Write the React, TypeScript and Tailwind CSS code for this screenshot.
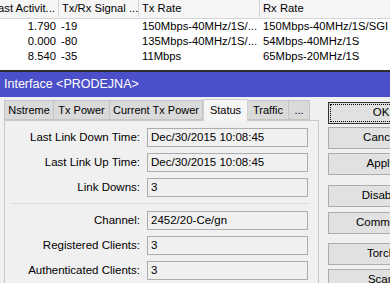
import React from "react";

type Row = {
  last: string;
  signal: string;
  tx: string;
  rx: string;
};

const rows: Row[] = [
  { last: "1.790", signal: "-19", tx: "150Mbps-40MHz/1S/...", rx: "150Mbps-40MHz/1S/SGI" },
  { last: "0.000", signal: "-80", tx: "135Mbps-40MHz/1S/...", rx: "54Mbps-40MHz/1S" },
  { last: "8.540", signal: "-35", tx: "11Mbps", rx: "65Mbps-20MHz/1S" },
];

const tabs = [
  { name: "Nstreme", w: "w-[50px]" },
  { name: "Tx Power", w: "w-[56px]" },
  { name: "Current Tx Power", w: "w-[93px]" },
  { name: "Status", w: "w-[45px]", active: true },
  { name: "Traffic", w: "w-[41px]" },
  { name: "...", w: "w-[21px]" },
];

const Field = ({ label, value }: { label: string; value: string }) => (
  <div className="flex items-center h-[19px] mb-[6px]">
    <div className="w-[142px] shrink-0 text-right pr-[7px] whitespace-nowrap">{label}</div>
    <div className="w-[161px] shrink-0 h-[19px] border border-[#acacac] bg-[#f0f0f0] px-[3px] leading-[17px] whitespace-nowrap overflow-hidden">
      {value}
    </div>
  </div>
);

const Btn = ({ label, className }: { label: string; className?: string }) => (
  <div
    className={
      "w-[106px] h-[22px] border border-[#adadad] bg-[#e1e1e1] flex items-center justify-center " +
      (className ?? "")
    }
  >
    {label}
  </div>
);

export default function App() {
  return (
    <div
      className="w-[390px] h-[283px] overflow-hidden bg-[#f0f0f0] text-[11.5px] text-black"
      style={{ fontFamily: '"Liberation Sans", Arial, sans-serif' }}
    >
      {/* registration table */}
      <div className="h-[70px] bg-white text-[11.25px]">
        <div className="flex h-[19px] bg-[#f5f5f5] border-b border-[#d5d5d5] items-end pb-[1px]">
          <div className="w-[59px] shrink-0 border-r border-[#d5d5d5] h-full flex items-end justify-end pr-[3px] whitespace-nowrap overflow-hidden">
            Last Activit...
          </div>
          <div className="w-[80px] shrink-0 border-r border-[#d5d5d5] h-full flex items-end pl-[3px] whitespace-nowrap">
            Tx/Rx Signal ...
          </div>
          <div className="w-[121px] shrink-0 border-r border-[#d5d5d5] h-full flex items-end pl-[3px]">Tx Rate</div>
          <div className="flex-1 h-full flex items-end pl-[3px]">Rx Rate</div>
        </div>
        {rows.map((r) => (
          <div key={r.last} className="flex h-[15px] items-center">
            <div className="w-[59px] shrink-0 text-right pr-[3px]">{r.last}</div>
            <div className="w-[80px] shrink-0 pl-[2px]">{r.signal}</div>
            <div className="w-[121px] shrink-0 pl-[3px] whitespace-nowrap overflow-hidden">{r.tx}</div>
            <div className="flex-1 pl-[3px] whitespace-nowrap">{r.rx}</div>
          </div>
        ))}
      </div>

      {/* window */}
      <div className="border-t-2 border-[#2e2e2e]">
        <div className="h-[25px] bg-[#4b4fc9] text-white text-[12.5px] flex items-center pl-[4px]">
          Interface &lt;PRODEJNA&gt;
        </div>
        <div className="flex">
          <div className="w-[319px] shrink-0 pl-[4px] pt-[1px]">
            <div className="flex items-end h-[22px] text-[11px]">
              {tabs.map((t) =>
                t.active ? (
                  <div
                    key={t.name}
                    className={t.w + " shrink-0 h-[22px] bg-[#f5f5f5] border border-b-0 border-[#d0d0d0] flex items-center justify-center -mb-px relative"}
                  >
                    {t.name}
                  </div>
                ) : (
                  <div
                    key={t.name}
                    className={t.w + " shrink-0 h-[20px] bg-[#dadada] border border-l-0 first:border-l border-[#c4c4c4] flex items-center justify-center whitespace-nowrap"}
                  >
                    {t.name}
                  </div>
                )
              )}
            </div>
            <div className="h-[200px] border border-[#c8c8c8] bg-[#f0f0f0] pt-[7px]">
              <Field label="Last Link Down Time:" value="Dec/30/2015 10:08:45" />
              <Field label="Last Link Up Time:" value="Dec/30/2015 10:08:45" />
              <Field label="Link Downs:" value="3" />
              <div className="ml-[5px] mr-[8px] mt-[2px] mb-[7px] border-t border-[#dcdcdc]" />
              <Field label="Channel:" value="2452/20-Ce/gn" />
              <Field label="Registered Clients:" value="3" />
              <Field label="Authenticated Clients:" value="3" />
            </div>
          </div>
          <div className="ml-[9px] shrink-0 pt-[5px]">
            <div className="w-[106px] h-[22px] border border-[#333] bg-[#e1e1e1] p-[1px]">
              <div className="h-full border border-dotted border-black flex items-center justify-center">OK</div>
            </div>
            <Btn label="Cancel" className="mt-[3px]" />
            <Btn label="Apply" className="mt-[4px]" />
            <Btn label="Disable" className="mt-[10px]" />
            <Btn label="Comment" className="mt-[5px]" />
            <Btn label="Torch" className="mt-[9px]" />
            <Btn label="Scan" className="mt-[4px]" />
          </div>
        </div>
      </div>
    </div>
  );
}
